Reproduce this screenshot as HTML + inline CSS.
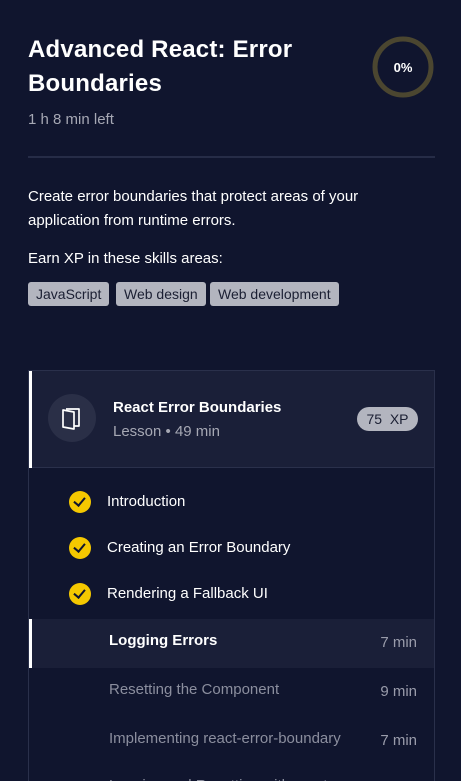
<!DOCTYPE html>
<html><head><meta charset="utf-8"><style>
*{margin:0;padding:0;box-sizing:border-box}
html,body{width:461px;height:781px;overflow:hidden}
body{background:#10152e;font-family:"Liberation Sans",sans-serif;color:#fff;position:relative}
.a{position:absolute;white-space:nowrap}
h1{position:absolute;left:28px;top:33px;font-size:24px;line-height:34px;font-weight:bold;letter-spacing:0.2px}
.tag{position:absolute;top:282px;height:24px;background:#b3b5bf;color:#1b1f33;border-radius:3px;font-size:14px;line-height:24px;padding:0 8px}
.card{position:absolute;left:28px;top:370px;width:407px;height:411px;border:1px solid #2a304b;border-bottom:none;background:#10152e;overflow:hidden}
.li{position:absolute;left:107px;font-size:15px}
.chk{position:absolute;left:69px;width:22px;height:22px;border-radius:50%;background:#f5c800}
.chk:after{content:"";position:absolute;left:7px;top:4px;width:5px;height:9px;border:solid #10152e;border-width:0 2px 2px 0;transform:rotate(40deg)}
.min{position:absolute;right:44px;font-size:15px;color:#9a9cab}
</style></head><body>
<h1>Advanced React: Error<br>Boundaries</h1>
<div class="a" style="left:28px;top:111px;font-size:15px;color:#a6a8b4">1 h 8 min left</div>
<svg class="a" style="left:370px;top:34px" width="66" height="66"><circle cx="33" cy="33" r="28" fill="none" stroke="#4b4630" stroke-width="5"/><text x="33" y="38" text-anchor="middle" font-family="Liberation Sans" font-weight="bold" font-size="13" fill="#fff">0%</text></svg>
<div class="a" style="left:28px;top:156px;width:407px;height:2px;background:#262c47"></div>
<div class="a" style="left:28px;top:185px;font-size:15px;line-height:24px">Create error boundaries that protect areas of your<br>application from runtime errors.</div>
<div class="a" style="left:28px;top:250px;font-size:15px">Earn XP in these skills areas:</div>
<div class="tag" style="left:28px">JavaScript</div>
<div class="tag" style="left:116px">Web design</div>
<div class="tag" style="left:210px">Web development</div>
<div class="card">
<div class="a" style="left:0;top:0;width:405px;height:97px;background:#1a1f38;border-bottom:1px solid #2a304b"></div>
<div class="a" style="left:0;top:0;width:3px;height:97px;background:#fff"></div>
<div class="a" style="left:19px;top:23px;width:48px;height:48px;border-radius:50%;background:#2a2f47"></div>
<svg class="a" style="left:31px;top:35px" width="24" height="26"><path d="M3 4 L14 6 L14 23 L3 21 Z" fill="none" stroke="#fff" stroke-width="1.7" stroke-linejoin="round"/><path d="M6 3 L19 3 L19 20 L14 20" fill="none" stroke="#fff" stroke-width="1.7" stroke-linejoin="round"/></svg>
<div class="a" style="left:84px;top:28px;font-size:15px;font-weight:bold">React Error Boundaries</div>
<div class="a" style="left:84px;top:52px;font-size:15px;color:#a6a8b4">Lesson • 49 min</div>
<div class="a" style="left:328px;top:36px;width:61px;height:24px;border-radius:12px;background:#b3b5bf;color:#1b1f33;font-size:14px;line-height:24px;text-align:center">75&nbsp; XP</div>
<div class="a" style="left:0;top:248px;width:405px;height:49px;background:#1a1f38"></div>
<div class="a" style="left:0;top:248px;width:3px;height:49px;background:#fff"></div>
</div>
<div class="chk" style="top:491px"></div><div class="li" style="top:493px">Introduction</div>
<div class="chk" style="top:537px"></div><div class="li" style="top:539px">Creating an Error Boundary</div>
<div class="chk" style="top:583px"></div><div class="li" style="top:585px">Rendering a Fallback UI</div>
<div class="li" style="left:109px;top:632px;font-weight:bold">Logging Errors</div><div class="min" style="top:634px">7 min</div>
<div class="li" style="left:109px;top:681px;color:#8b8e9e">Resetting the Component</div><div class="min" style="top:683px">9 min</div>
<div class="li" style="left:109px;top:730px;color:#8b8e9e">Implementing react-error-boundary</div><div class="min" style="top:732px">7 min</div>
<div class="li" style="left:109px;top:777px;color:#8b8e9e">Logging and Resetting with react</div>
</body></html>
